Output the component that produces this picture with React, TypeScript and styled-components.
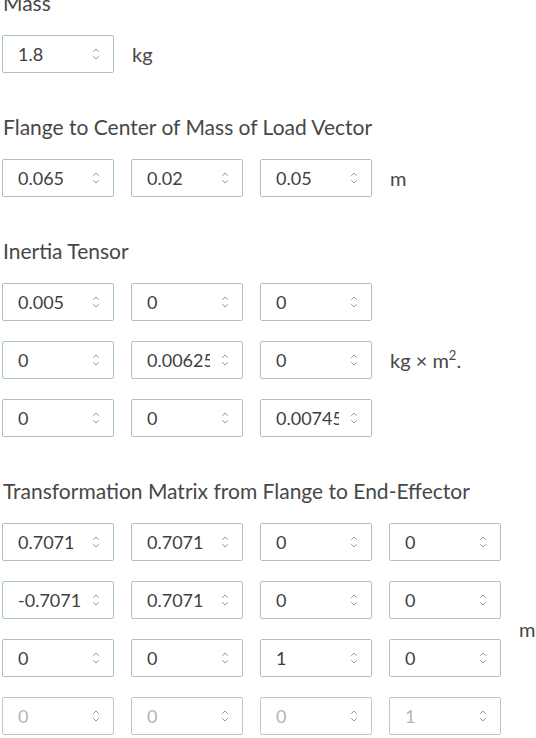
import styled, { createGlobalStyle } from "styled-components";

type Cell = { value: string; disabled?: boolean };

const massRows: Cell[][] = [[{ value: "1.8" }]];

const flangeRows: Cell[][] = [
  [{ value: "0.065" }, { value: "0.02" }, { value: "0.05" }],
];

const inertiaRows: Cell[][] = [
  [{ value: "0.005" }, { value: "0" }, { value: "0" }],
  [{ value: "0" }, { value: "0.00625" }, { value: "0" }],
  [{ value: "0" }, { value: "0" }, { value: "0.00745" }],
];

const transformRows: Cell[][] = [
  [{ value: "0.7071" }, { value: "0.7071" }, { value: "0" }, { value: "0" }],
  [{ value: "-0.7071" }, { value: "0.7071" }, { value: "0" }, { value: "0" }],
  [{ value: "0" }, { value: "0" }, { value: "1" }, { value: "0" }],
  [
    { value: "0", disabled: true },
    { value: "0", disabled: true },
    { value: "0", disabled: true },
    { value: "1", disabled: true },
  ],
];

const Spinner = () => (
  <SpinIcon width="8" height="16" viewBox="0 0 8 16">
    <path d="M1.5 5.5 L4 3 L6.5 5.5" />
    <path d="M1.5 10.5 L4 13 L6.5 10.5" />
  </SpinIcon>
);

const NumberField: React.FC<{ cell: Cell }> = ({ cell }) => (
  <Field $disabled={cell.disabled}>
    <Input
      type="text"
      inputMode="decimal"
      value={cell.value}
      disabled={cell.disabled}
      readOnly
    />
    <Spinner />
  </Field>
);

const Matrix: React.FC<{ rows: Cell[][]; unit: React.ReactNode }> = ({
  rows,
  unit,
}) => (
  <Block>
    <Grid $cols={rows[0].length}>
      {rows.flat().map((cell, i) => (
        <NumberField key={i} cell={cell} />
      ))}
    </Grid>
    <Unit>{unit}</Unit>
  </Block>
);

const App: React.FC = () => {
  return (
    <>
      <GlobalStyle />
      <Wrapper>
        <Section>
          <Title>{"Mass"}</Title>
          <Matrix rows={massRows} unit={"kg"} />
        </Section>
        <Section>
          <Title>{"Flange to Center of Mass of Load Vector"}</Title>
          <Matrix rows={flangeRows} unit={"m"} />
        </Section>
        <Section>
          <Title>{"Inertia Tensor"}</Title>
          <Matrix
            rows={inertiaRows}
            unit={
              <>
                {"kg × m"}
                <sup>{"2"}</sup>
                {"."}
              </>
            }
          />
        </Section>
        <Section>
          <Title>{"Transformation Matrix from Flange to End-Effector"}</Title>
          <Matrix rows={transformRows} unit={"m"} />
        </Section>
      </Wrapper>
    </>
  );
};

const GlobalStyle = createGlobalStyle`
  html, body {
    margin: 0;
    padding: 0;
    overflow: hidden;
    background: #ffffff;
  }
  body {
    font-family: Lato, "Liberation Sans", sans-serif;
    color: #444444;
  }
`;

const Wrapper = styled.div`
  margin-top: -8px;
  padding-left: 2px;
  display: flex;
  flex-direction: column;
  gap: 43px;
`;

const Section = styled.section`
  display: flex;
  flex-direction: column;
  gap: 21px;
`;

const Title = styled.div`
  font-size: 21px;
  line-height: 22px;
  color: #474747;
  margin-left: 1px;
  white-space: nowrap;
`;

const Block = styled.div`
  display: flex;
  align-items: center;
  gap: 17px;
`;

const Grid = styled.div<{ $cols: number }>`
  display: grid;
  grid-template-columns: repeat(${({ $cols }) => $cols}, 112px);
  column-gap: 17px;
  row-gap: 20px;
`;

const Unit = styled.div`
  font-size: 20px;
  color: #474747;
  white-space: nowrap;
  padding-left: 1px;

  sup {
    font-size: 13px;
    line-height: 0;
  }
`;

const Field = styled.div<{ $disabled?: boolean }>`
  box-sizing: border-box;
  width: 112px;
  height: 38px;
  display: flex;
  align-items: center;
  padding: 0 13px 0 15px;
  border: 1px solid ${({ $disabled }) => ($disabled ? "#c4c4c4" : "#aac2cd")};
  border-radius: 2px;
  background: #ffffff;
  color: ${({ $disabled }) => ($disabled ? "#b4b4b4" : "#3f3f3f")};
`;

const Input = styled.input`
  width: 63px;
  flex: none;
  border: none;
  outline: none;
  padding: 0;
  margin: 0;
  background: transparent;
  font-family: Lato, "Liberation Sans", sans-serif;
  font-size: 18px;
  color: inherit;

  &:disabled {
    color: inherit;
    -webkit-text-fill-color: currentColor;
  }
`;

const SpinIcon = styled.svg`
  margin-left: auto;
  flex: none;
  fill: none;
  stroke: #8e9aa2;
  stroke-width: 1;
  stroke-linecap: round;
  stroke-linejoin: round;
`;

export default App;
